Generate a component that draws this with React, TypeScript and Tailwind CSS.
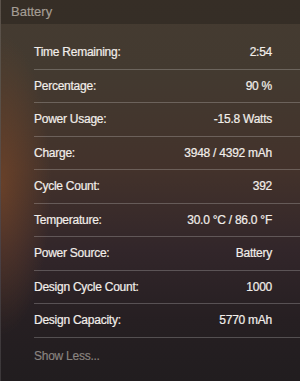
import React from "react";

const rows: [string, string][] = [
  ["Time Remaining:", "2:54"],
  ["Percentage:", "90 %"],
  ["Power Usage:", "-15.8 Watts"],
  ["Charge:", "3948 / 4392 mAh"],
  ["Cycle Count:", "392"],
  ["Temperature:", "30.0 °C / 86.0 °F"],
  ["Power Source:", "Battery"],
  ["Design Cycle Count:", "1000"],
  ["Design Capacity:", "5770 mAh"],
];

export default function App() {
  return (
    <div
      className="relative w-[300px] h-[381px] overflow-hidden border-l border-[rgba(255,255,255,0.12)] bg-[radial-gradient(ellipse_50px_150px_at_0px_185px,rgba(130,75,40,0.6),transparent),linear-gradient(to_bottom,#453b31_0px,#433a30_70px,#43322b_170px,#32262a_250px,#261f22_320px,#211d1f_381px)]"
      style={{ fontFamily: '"Liberation Sans", Arial, sans-serif' }}
    >
      <div className="h-[24px] bg-[rgba(35,30,26,0.45)] flex items-center pl-[10px] text-[13px] text-[#a59e95] [-webkit-text-stroke:0.15px_#a59e95]">
        Battery
      </div>
      <div className="pt-[12px] pl-[33px]">
        {rows.map(([k, v]) => (
          <div
            key={k}
            className="h-[33.5px] flex items-center justify-between pr-[28px] border-b border-[rgba(255,255,255,0.22)] text-[12px] tracking-[-0.25px] text-[#f2eeea] [-webkit-text-stroke:0.2px_#f2eeea]"
          >
            <span>{k}</span>
            <span>{v}</span>
          </div>
        ))}
        <div className="h-[36px] flex items-center text-[12px] tracking-[-0.25px] text-[#8a8480] [-webkit-text-stroke:0.15px_#8a8480]">
          Show Less...
        </div>
      </div>
    </div>
  );
}
